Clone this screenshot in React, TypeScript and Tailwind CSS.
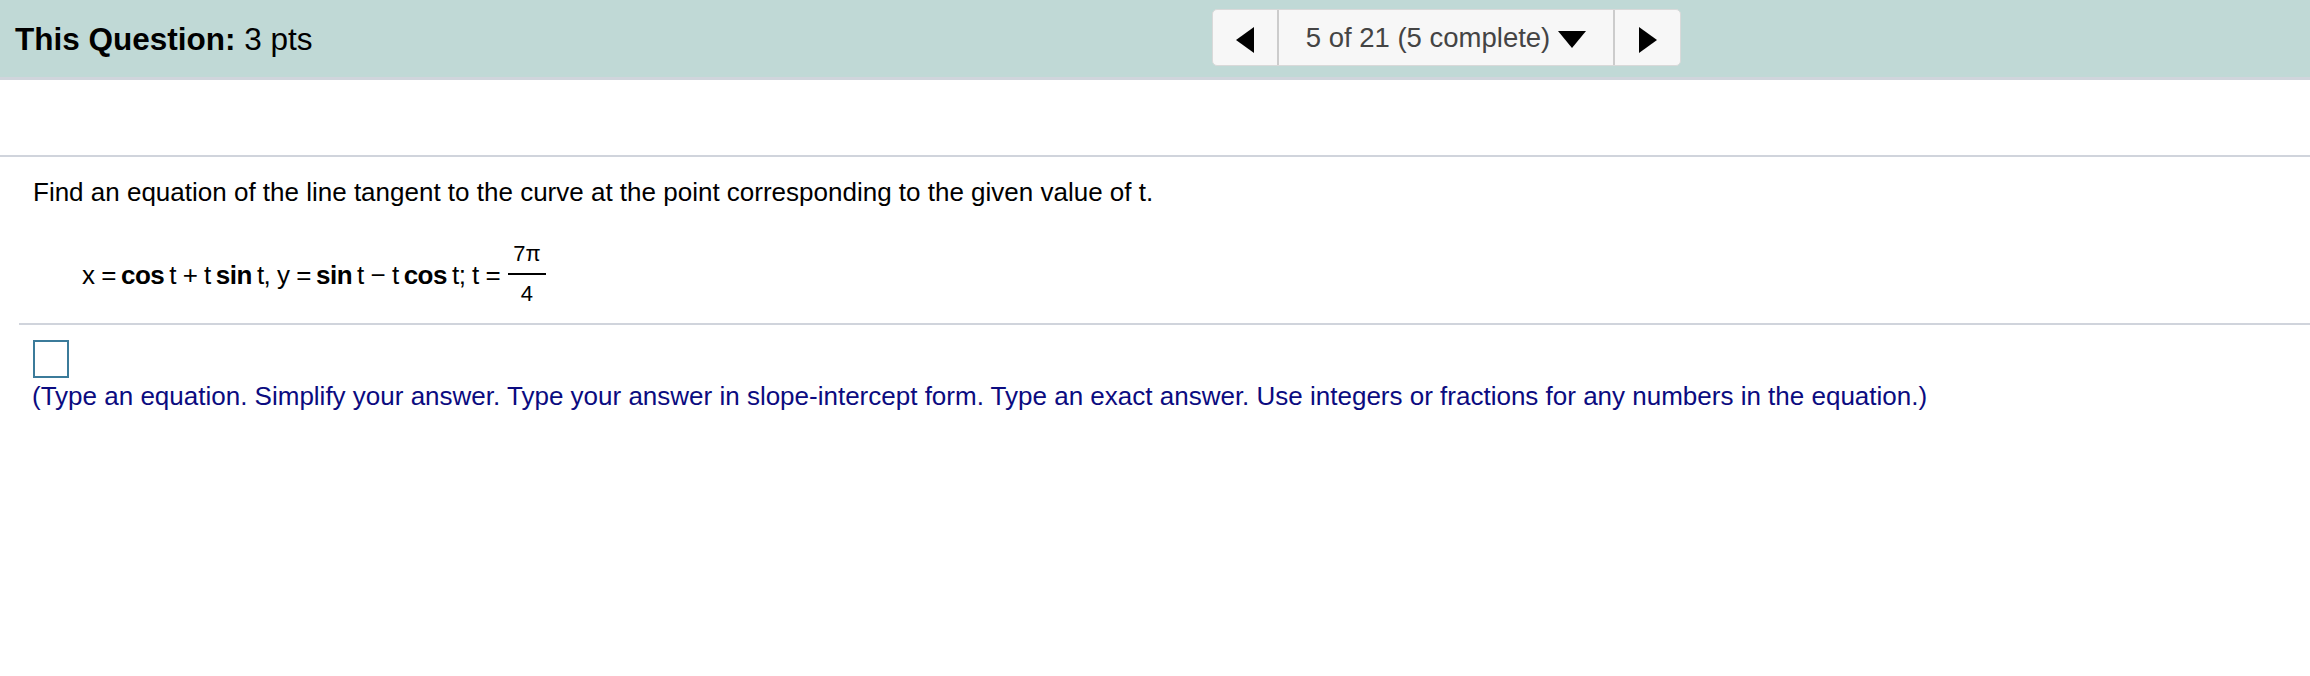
import React from 'react'

function Tri({ dir }: { dir: 'left' | 'right' }) {
  return (
    <svg width="18" height="26" viewBox="0 0 18 26" className="mt-[5px]">
      {dir === 'left' ? <polygon points="18,0 18,26 0,13" fill="#000" /> : <polygon points="0,0 0,26 18,13" fill="#000" />}
    </svg>
  )
}

function Frac() {
  return (
    <span className="inline-flex flex-col items-center ml-[8px] text-[22px] leading-none -translate-y-[1px] tracking-normal">
      <span className="px-[5px] pb-[8px]">7π</span>
      <span className="w-full h-[2px] bg-black" />
      <span className="px-[5px] pt-[8px]">4</span>
    </span>
  )
}

export default function App() {
  return (
    <div className="w-[2310px] h-[676px] bg-white text-black font-['Liberation_Sans',Arial,sans-serif]">
      {/* Top bar */}
      <div className="h-[80px] bg-[#c0d9d6] border-b-[3px] border-[#d0d5dc] flex items-start">
        <div className="w-[1212px] shrink-0 pl-[15px] pt-[19px] text-[31.5px] leading-[40px]">
          <span className="font-bold">This Question:</span> 3 pts
        </div>
        <div className="mt-[9px] h-[57px] flex rounded-[5px] border border-[#d9d9d9] bg-[#f7f7f7]">
          <div className="w-[66px] flex items-center justify-center border-r-2 border-[#cccccc]">
            <Tri dir="left" />
          </div>
          <div className="w-[334px] flex items-center justify-center gap-[8px] text-[27.5px] text-[#444]">
            <span>5 of 21 (5 complete)</span>
            <svg width="28" height="17" viewBox="0 0 28 17" className="mt-[4px]">
              <polygon points="0,0 28,0 14,17" fill="#000" />
            </svg>
          </div>
          <div className="w-[67px] flex items-center justify-center border-l-2 border-[#cccccc]">
            <Tri dir="right" />
          </div>
        </div>
      </div>

      {/* Question */}
      <div className="mt-[75px] h-[2px] bg-[#d0d4dc]" />
      <p className="mt-[20px] pl-[33px] text-[26px] leading-[30px]">
        Find an equation of the line tangent to the curve at the point corresponding to the given value of t.
      </p>
      <div className="mt-[36px] pl-[82px] flex items-center text-[26px] h-[64px] tracking-[-0.5px]">
        <span>x = </span>
        <b className="mx-[5px]">cos</b>
        <span>t + t</span>
        <b className="mx-[5px]">sin</b>
        <span>t, y = </span>
        <b className="mx-[5px]">sin</b>
        <span>t − t</span>
        <b className="mx-[5px]">cos</b>
        <span>t; t =</span>
        <Frac />
      </div>
      <div className="mt-[16px] ml-[19px] h-[2px] bg-[#d0d4dc]" />

      {/* Answer */}
      <div className="mt-[15px] ml-[33px] w-[36px] h-[38px] border-2 border-[#3b7b9a]" />
      <p className="mt-[3px] pl-[32px] text-[26px] leading-[30px] text-[#0b0b80]">
        (Type an equation. Simplify your answer. Type your answer in slope-intercept form. Type an exact answer. Use integers or fractions for any numbers in the equation.)
      </p>
    </div>
  )
}
